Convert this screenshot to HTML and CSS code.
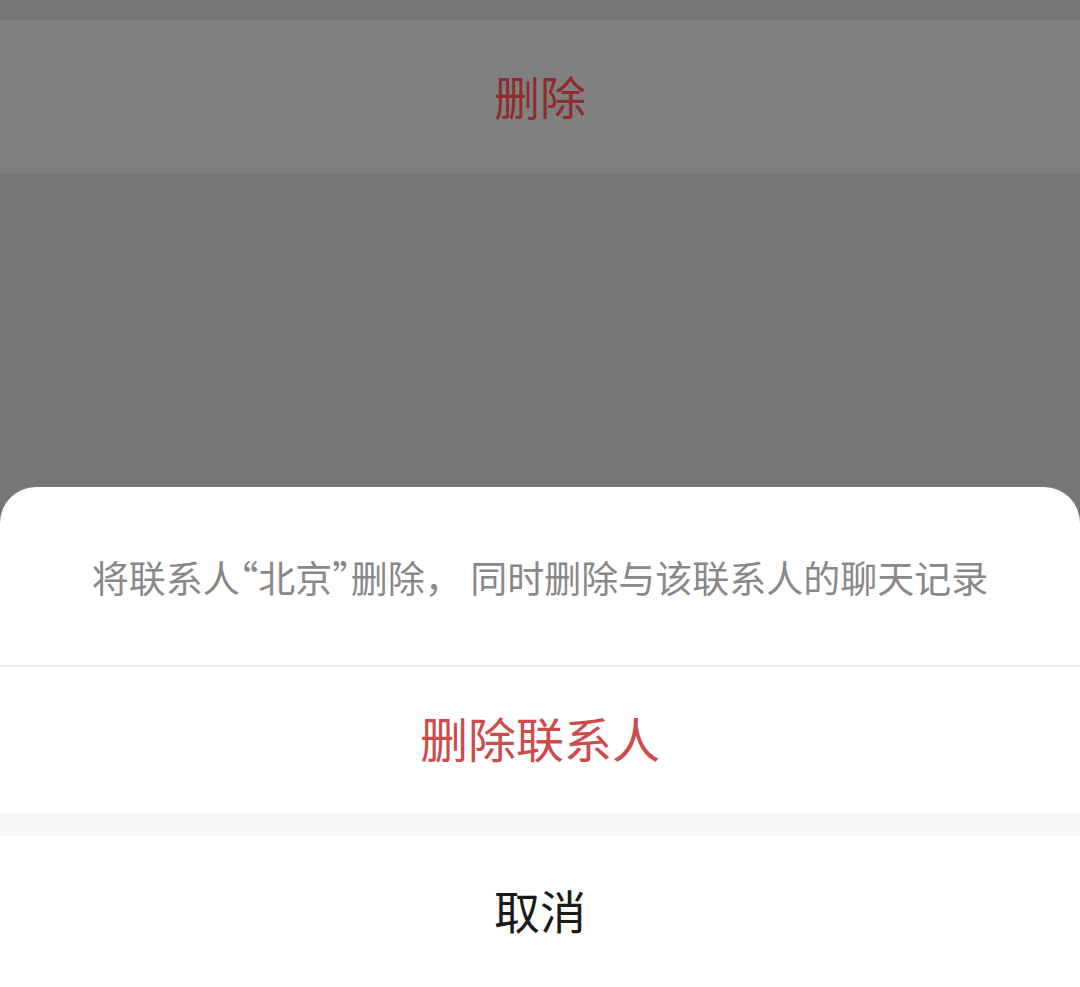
FILE: index.html
```html
<!DOCTYPE html>
<html lang="zh-CN">
<head>
  <meta charset="UTF-8">
  <meta name="viewport" content="width=device-width, initial-scale=1.0">
  <title>删除联系人</title>
  <link rel="stylesheet" href="styles.css">
</head>
<body>
  <div class="page">
    <div class="top-gap"></div>
    <div class="delete-row">删除</div>
    <div class="mask"></div>
  </div>
  <div class="sheet">
    <div class="sheet-msg">将联系人<span class="q">“</span>北京<span class="q">”</span>删除， 同时删除与该联系人的聊天记录</div>
    <div class="sheet-btn danger">删除联系人</div>
    <div class="sheet-gap"></div>
    <div class="sheet-btn cancel">取消</div>
  </div>
</body>
</html>
```

FILE: styles.css
```css
html, body {
  margin: 0;
  padding: 0;
}
body {
  width: 1080px;
  height: 987px;
  overflow: hidden;
  background: #767676;
  font-family: "Noto Sans CJK SC", "Noto Sans", sans-serif;
  display: flex;
  flex-direction: column;
}
.page {
  flex: 1;
  display: flex;
  flex-direction: column;
}
.top-gap {
  height: 20px;
}
.delete-row {
  height: 153px;
  background: #808080;
  color: #8f2c2e;
  font-size: 46px;
  display: flex;
  align-items: center;
  justify-content: center;
  padding-bottom: 4px;
  box-sizing: border-box;
}
.mask {
  flex: 1;
}
.sheet {
  background: #fff;
  border-radius: 36px 36px 0 0;
  display: flex;
  flex-direction: column;
}
.sheet-msg {
  height: 180px;
  border-bottom: 2px solid #ededed;
  color: #888;
  font-size: 37px;
  display: flex;
  align-items: center;
  justify-content: center;
  padding-top: 2px;
  box-sizing: border-box;
  white-space: pre;
}
.sheet-msg .q {
  font-feature-settings: "halt";
}
.sheet-btn {
  display: flex;
  align-items: center;
  justify-content: center;
  font-size: 46px;
  padding-bottom: 6px;
  box-sizing: border-box;
}
.danger {
  height: 146px;
  color: #cd4b4b;
  font-size: 48px;
}
.sheet-gap {
  height: 23px;
  background: #f7f7f7;
}
.cancel {
  height: 151px;
  color: #1a1a1a;
}
```
